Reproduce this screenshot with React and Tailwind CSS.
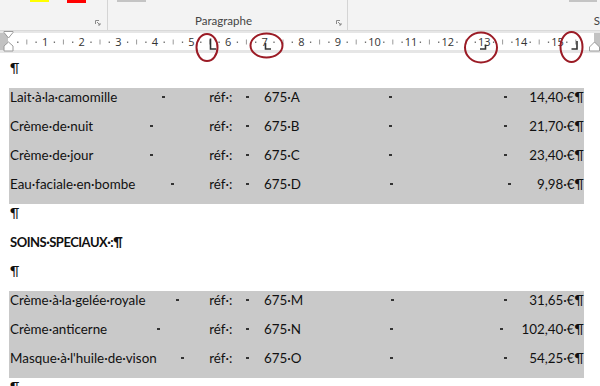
import React from "react";

const CM = 36.6;
const X0 = 8.5;
const cx = (v) => X0 + v * CM;

function Launcher() {
  return (
    <svg width="6" height="6" viewBox="0 0 6 6" className="block">
      <path d="M0.5 4 V0.5 H4" stroke="#8a8a8a" strokeWidth="1" fill="none" />
      <path d="M2 2 L5 5 M5 3 V5 H3" stroke="#8a8a8a" strokeWidth="1" fill="none" />
    </svg>
  );
}

function Ruler() {
  const items = [];
  for (let i = 0; i < 16; i++) {
    if (i > 0) {
      items.push(
        <text key={"n" + i} x={cx(i)} y={45.5} fontSize="11" textAnchor="middle" fill="#333" fontFamily="'Open Sans', sans-serif">
          {i}
        </text>
      );
    }
    [0.25, 0.75].forEach((f) => {
      if (i + f < 15.6)
        items.push(<rect key={"d" + i + f} x={cx(i + f) - 0.5} y={41.5} width="1.3" height="1.5" fill="#6f6f6f" />);
    });
    if (i + 0.5 < 15.6)
      items.push(<rect key={"h" + i} x={cx(i + 0.5) - 0.5} y={39.5} width="1" height="5" fill="#9a9a9a" />);
  }
  return (
    <svg width="600" height="22" viewBox="0 31 600 22" className="block">
      <rect x="0" y="31" width="600" height="22" fill="#e6e6e6" />
      <rect x="5" y="33" width="589" height="17" fill="#ffffff" />
      <rect x="0" y="33" width="8" height="17" fill="#c2c2c2" />
      <rect x="594" y="33" width="6" height="17" fill="#c2c2c2" />
      {items}
      <path d="M4 31.5 H13 V32.5 L8.5 38 L4 32.5 Z" fill="#ffffff" stroke="#9a9a9a" strokeWidth="1" />
      <path d="M8.5 42 L13 46 V51 H4 V46 Z" fill="#ffffff" stroke="#9a9a9a" strokeWidth="1" />
      <path d="M594.5 42 L599.5 47 V51 H589.5 V47 Z" fill="#ffffff" stroke="#9a9a9a" strokeWidth="1" />
      <path d="M210.5 38.5 V49 H216" stroke="#333" strokeWidth="1.6" fill="none" />
      <path d="M265.5 43 V49 H271" stroke="#333" strokeWidth="1.6" fill="none" />
      <path d="M485.5 44.5 V49 H480" stroke="#333" strokeWidth="1.6" fill="none" />
      <path d="M577 41 V49 H571.5" stroke="#333" strokeWidth="1.6" fill="none" />
    </svg>
  );
}

function Circles() {
  return (
    <svg width="600" height="70" viewBox="0 0 600 70" className="absolute left-0 top-0 pointer-events-none">
      <ellipse cx="207" cy="47.5" rx="10.5" ry="13.5" stroke="#9b1b25" strokeWidth="2" fill="none" />
      <ellipse cx="266.5" cy="45.5" rx="16" ry="12" stroke="#9b1b25" strokeWidth="2" fill="none" />
      <ellipse cx="481" cy="47.5" rx="16" ry="15" stroke="#9b1b25" strokeWidth="2" fill="none" />
      <ellipse cx="571.5" cy="47" rx="11" ry="15" stroke="#9b1b25" strokeWidth="2" fill="none" />
    </svg>
  );
}

function Mark() {
  return <span className="inline-block w-[3px] h-[2px] bg-[#333]" />;
}

function Tab() {
  return (
    <span className="flex-1 flex justify-center items-center">
      <Mark />
    </span>
  );
}

function Row({ name, ref2, price }) {
  return (
    <div className="flex h-[29px] pb-[11px] leading-[18px] items-stretch">
      <div className="w-[200px] flex">
        <span className="whitespace-nowrap">{name}</span>
        <Tab />
      </div>
      <div className="w-[55px] flex">
        <span className="w-[37px] whitespace-nowrap">réf·:</span>
        <span className="flex items-center">
          <Mark />
        </span>
      </div>
      <div className="w-[219px] flex">
        <span className="whitespace-nowrap">{ref2}</span>
        <Tab />
      </div>
      <div className="w-[93px] flex">
        <Tab />
        <span className="whitespace-nowrap">{price}</span>
      </div>
      <span>¶</span>
    </div>
  );
}

function Para({ children, bold }) {
  return (
    <div
      className={
        "h-[29px] pb-[11px] leading-[18px] pl-[10px] whitespace-nowrap " +
        (bold ? "font-bold text-[13px] tracking-[-0.5px]" : "")
      }
    >
      {children}
    </div>
  );
}

export default function App() {
  const block1 = [
    ["Lait·à·la·camomille", "675·A", "14,40·€"],
    ["Crème·de·nuit", "675·B", "21,70·€"],
    ["Crème·de·jour", "675·C", "23,40·€"],
    ["Eau·faciale·en·bombe", "675·D", "9,98·€"],
  ];
  const block2 = [
    ["Crème·à·la·gelée·royale", "675·M", "31,65·€"],
    ["Crème·anticerne", "675·N", "102,40·€"],
    ["Masque·à·l'huile·de·vison", "675·O", "54,25·€"],
  ];
  return (
    <div className="relative w-[600px] h-[386px] overflow-hidden bg-white">
      <div className="flex h-[31px] bg-[#f3f3f3] border-b border-[#d9d9d9] font-['Lato',sans-serif]">
        <div className="w-[108px] flex flex-col justify-between">
          <div className="flex items-start pl-[30px]">
            <div className="w-[19px] h-[2px] bg-[#ffff00]" />
            <div className="w-[19px] h-[3px] bg-[#ff0000] ml-[18px]" />
          </div>
          <div className="flex justify-end pr-[6px] pb-[4px]">
            <Launcher />
          </div>
        </div>
        <div className="w-px bg-[#d4d4d4]" />
        <div className="w-[241px] flex flex-col justify-between">
          <div className="pl-[9px]">
            <div className="w-[29px] h-[2px] bg-[#c4c4c4]" />
          </div>
          <div className="flex items-end pb-[1px]">
            <span className="ml-[87px] text-[11.5px] leading-[16px] text-[#444]">Paragraphe</span>
            <span className="ml-auto mr-[5px] mb-[3px]">
              <Launcher />
            </span>
          </div>
        </div>
        <div className="w-px bg-[#d4d4d4]" />
        <div className="flex-1 flex flex-col justify-between">
          <div className="pl-[221px]">
            <div className="w-[28px] h-[2px] bg-[#c4c4c4]" />
          </div>
          <div className="pl-[246px] pb-[1px] text-[11.5px] leading-[16px] text-[#444]">S</div>
        </div>
      </div>
      <Ruler />
      <div className="pt-[6px] font-['Lato',sans-serif] text-[13.4px] text-[#111]">
        <Para>¶</Para>
        <div className="ml-[9px] w-[575px] pl-[1px] bg-[#c9c9c9]">
          {block1.map((r) => (
            <Row key={r[0]} name={r[0]} ref2={r[1]} price={r[2]} />
          ))}
        </div>
        <Para>¶</Para>
        <Para bold>SOINS·SPECIAUX·:¶</Para>
        <Para>¶</Para>
        <div className="ml-[9px] w-[575px] pl-[1px] bg-[#c9c9c9]">
          {block2.map((r) => (
            <Row key={r[0]} name={r[0]} ref2={r[1]} price={r[2]} />
          ))}
        </div>
        <Para>¶</Para>
      </div>
      <Circles />
    </div>
  );
}
